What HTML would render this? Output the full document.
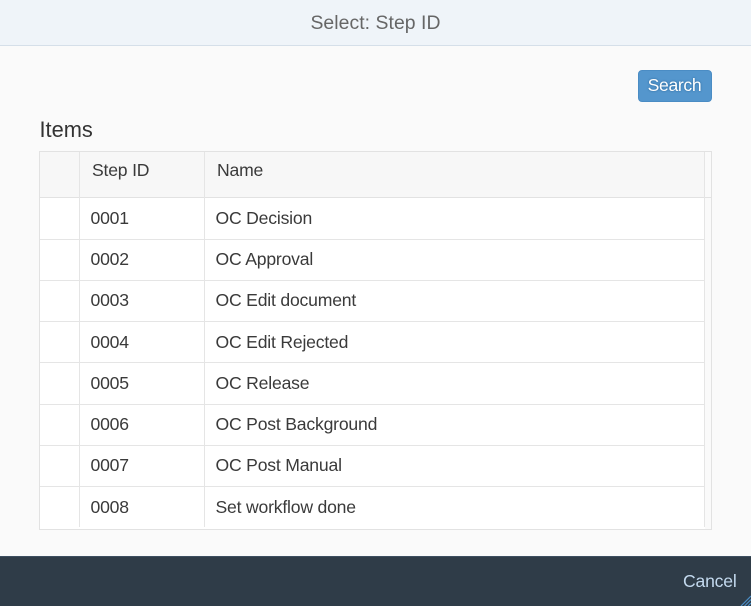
<!DOCTYPE html>
<html><head><meta charset="utf-8"><style>
html,body{margin:0;padding:0;width:751px;height:606px;overflow:hidden;background:#fafafa;font-family:"Liberation Sans",sans-serif;color:#333}
div{position:absolute;box-sizing:border-box}
.t{white-space:nowrap;font-size:17.6px;line-height:22px;color:#3a3a3a;letter-spacing:-.2px}
.r{left:40px;width:665px;height:1px;background:#e5e5e5}
.v{width:1px;background:#e5e5e5}
</style></head><body>
<div style="left:0;top:0;width:751px;height:46px;background:#eff4f9;border-bottom:1px solid #d5dfe9"></div>
<div class="t" style="left:0;top:12px;width:751px;text-align:center;font-size:19.4px;letter-spacing:.05px;color:#666">Select: Step ID</div>
<div style="left:638px;top:70px;width:74px;height:32px;background:#5496cd;border:1px solid #4a8cc4;border-radius:4px"></div>
<div class="t" style="left:637.5px;top:74px;width:74px;text-align:center;color:#fff;letter-spacing:-.35px;text-shadow:0 0 2px #2a6496">Search</div>
<div class="t" style="left:39.5px;top:118px;font-size:21.8px;line-height:24px;color:#333;letter-spacing:0">Items</div>

<div style="left:39px;top:151px;width:673px;height:379px;background:#fff;border:1px solid #e2e2e2"></div>
<div style="left:40px;top:152px;width:665px;height:45px;background:#f7f7f7"></div>
<div style="left:705px;top:152px;width:6px;height:377px;background:#fafafa"></div>
<div class="r" style="top:197px;width:671px;background:#e2e2e2"></div>
<div class="r" style="top:239px"></div>
<div class="r" style="top:280px"></div>
<div class="r" style="top:321px"></div>
<div class="r" style="top:362px"></div>
<div class="r" style="top:404px"></div>
<div class="r" style="top:445px"></div>
<div class="r" style="top:486px"></div>
<div class="v" style="left:79px;top:152px;height:375px"></div>
<div class="v" style="left:204px;top:152px;height:375px"></div>
<div class="v" style="left:704px;top:152px;height:375px"></div>

<div class="t" style="left:92px;top:159px">Step ID</div>
<div class="t" style="left:217px;top:159px">Name</div>

<div class="t" style="left:90.5px;top:207px">0001</div><div class="t" style="left:215.5px;top:207px">OC Decision</div>
<div class="t" style="left:90.5px;top:248px">0002</div><div class="t" style="left:215.5px;top:248px">OC Approval</div>
<div class="t" style="left:90.5px;top:289px">0003</div><div class="t" style="left:215.5px;top:289px">OC Edit document</div>
<div class="t" style="left:90.5px;top:331px">0004</div><div class="t" style="left:215.5px;top:331px">OC Edit Rejected</div>
<div class="t" style="left:90.5px;top:372px">0005</div><div class="t" style="left:215.5px;top:372px">OC Release</div>
<div class="t" style="left:90.5px;top:413px">0006</div><div class="t" style="left:215.5px;top:413px">OC Post Background</div>
<div class="t" style="left:90.5px;top:454px">0007</div><div class="t" style="left:215.5px;top:454px">OC Post Manual</div>
<div class="t" style="left:90.5px;top:496px">0008</div><div class="t" style="left:215.5px;top:496px">Set workflow done</div>

<div style="left:0;top:556px;width:751px;height:50px;background:#2f3c48;border-top:1px solid #3d4f60"></div>
<div class="t" style="left:683px;top:570px;color:#c3d9ee">Cancel</div>
<svg style="position:absolute;left:739px;top:594px" width="12" height="12" viewBox="0 0 12 12"><path d="M2 12L12 2M5.5 12L12 5.5M9 12L12 9" stroke="#4a8cc4" stroke-width="1.2" fill="none"/></svg>
</body></html>
